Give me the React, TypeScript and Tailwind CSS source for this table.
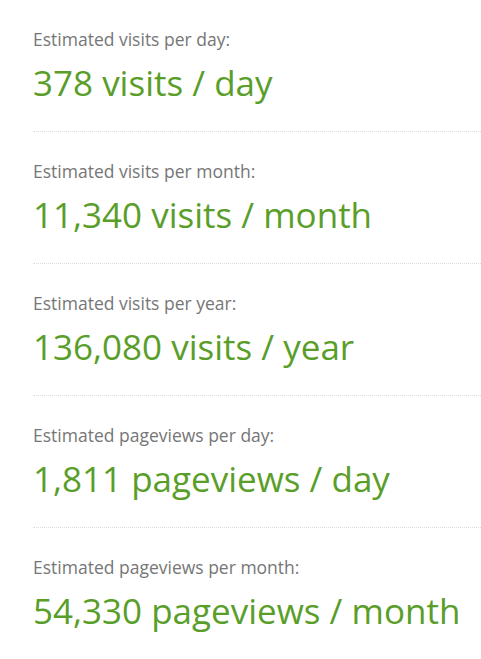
const stats = [
  { label: "Estimated visits per day:", value: "378 visits / day" },
  { label: "Estimated visits per month:", value: "11,340 visits / month" },
  { label: "Estimated visits per year:", value: "136,080 visits / year" },
  { label: "Estimated pageviews per day:", value: "1,811 pageviews / day" },
  { label: "Estimated pageviews per month:", value: "54,330 pageviews / month" },
];

const App = () => {
  return (
    <div className="bg-white min-h-[659px] pl-[33px] font-['Open_Sans',sans-serif]">
      {stats.map((s) => (
        <div
          key={s.label}
          className="h-[132px] pt-[29px] border-b border-dotted border-[#dcdcdc] last:border-b-0"
        >
          <p className="text-[17.5px] leading-[20px] text-[#767676]">{s.label}</p>
          <p className="mt-[12px] text-[35px] leading-[44px] text-[#5a9e2a]">
            {s.value}
          </p>
        </div>
      ))}
    </div>
  );
};

export default App;
